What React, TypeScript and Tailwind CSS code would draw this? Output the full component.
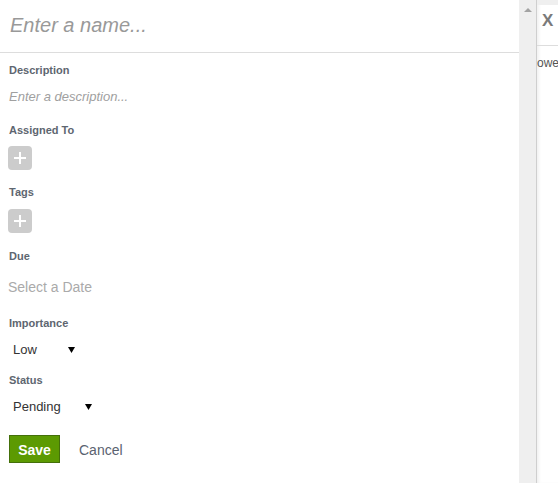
import React from 'react';

const PlusButton: React.FC = () => (
  <button className="flex h-[24px] w-[24px] items-center justify-center rounded-[4px] bg-[#cccccc]">
    <svg width="14" height="14" viewBox="0 0 14 14">
      <path d="M7 1v12M1 7h12" stroke="#ffffff" strokeWidth="2" />
    </svg>
  </button>
);

const Label: React.FC<{ text: string; className?: string }> = ({ text, className = '' }) => (
  <div className={`h-[14px] text-[11px] font-bold leading-[14px] text-[#5e6670] ${className}`}>{text}</div>
);

const FakeSelect: React.FC<{ value: string; textWidth: string; className?: string }> = ({
  value,
  textWidth,
  className = '',
}) => (
  <div className={`flex h-[18px] items-center pl-[5px] text-[13px] leading-[18px] text-[#333333] ${className}`}>
    <span className={textWidth}>{value}</span>
    <svg width="7" height="6" viewBox="0 0 7 6" className="mt-[-1px]">
      <path d="M0 0h7L3.5 6z" fill="#000000" />
    </svg>
  </div>
);

export default function App() {
  return (
    <div className="flex h-[483px] w-[558px] overflow-hidden bg-white font-['Liberation_Sans',Arial,sans-serif]">
      {/* main form */}
      <div className="w-[519px] shrink-0">
        <div className="flex h-[53px] items-center border-b border-[#dddddd] pl-[10px] pb-[2px]">
          <span className="text-[20px] italic text-[#999999]">Enter a name...</span>
        </div>

        <div className="pl-[9px]">
          <Label text="Description" className="mt-[10px]" />
          <div className="mt-[11px] h-[18px] text-[13px] italic leading-[18px] text-[#a0a0a0]">
            Enter a description...
          </div>

          <Label text="Assigned To" className="mt-[17px]" />
          <div className="mt-[9px] -ml-[1px]">
            <PlusButton />
          </div>

          <Label text="Tags" className="mt-[15px]" />
          <div className="mt-[10px] -ml-[1px]">
            <PlusButton />
          </div>

          <Label text="Due" className="mt-[16px]" />
          <div className="mt-[15px] -ml-[1px] h-[18px] text-[14px] leading-[18px] text-[#aaaaaa]">Select a Date</div>

          <Label text="Importance" className="mt-[20px]" />
          <FakeSelect value="Low" textWidth="w-[55px]" className="mt-[11px] -ml-[1px]" />

          <Label text="Status" className="mt-[14px]" />
          <FakeSelect value="Pending" textWidth="w-[72px]" className="mt-[11px] -ml-[1px]" />

          <div className="mt-[19px] flex items-center">
            <button className="h-[28px] w-[51px] border border-[#44700a] bg-[#5c9a02] pt-[2px] text-[14px] font-bold text-white">
              Save
            </button>
            <span className="ml-[19px] pt-[2px] text-[14px] text-[#5a6270]">Cancel</span>
          </div>
        </div>
      </div>

      {/* scrollbar */}
      <div className="w-[17px] shrink-0 bg-[#efefef] pt-[8px]">
        <div className="ml-[5px] h-0 w-0 border-x-[4px] border-b-[4px] border-x-transparent border-b-[#a3a3a3]" />
      </div>

      {/* side panel */}
      <div className="flex-1 overflow-hidden border-l border-[#cfcfcf] shadow-[inset_3px_0_3px_-1px_rgba(0,0,0,0.06)]">
        <div className="h-[5px] bg-[#efefef]" />
        <div className="flex h-[40px] items-start pl-[5px] pt-[5px]">
          <span className="text-[17px] font-bold leading-[22px] text-[#7a7a7a]">X</span>
        </div>
        <div className="border-t border-[#dddddd]" />
        <div className="mt-[9px] whitespace-nowrap text-[12px] leading-[16px] text-[#555555]">owe</div>
      </div>
    </div>
  );
}
